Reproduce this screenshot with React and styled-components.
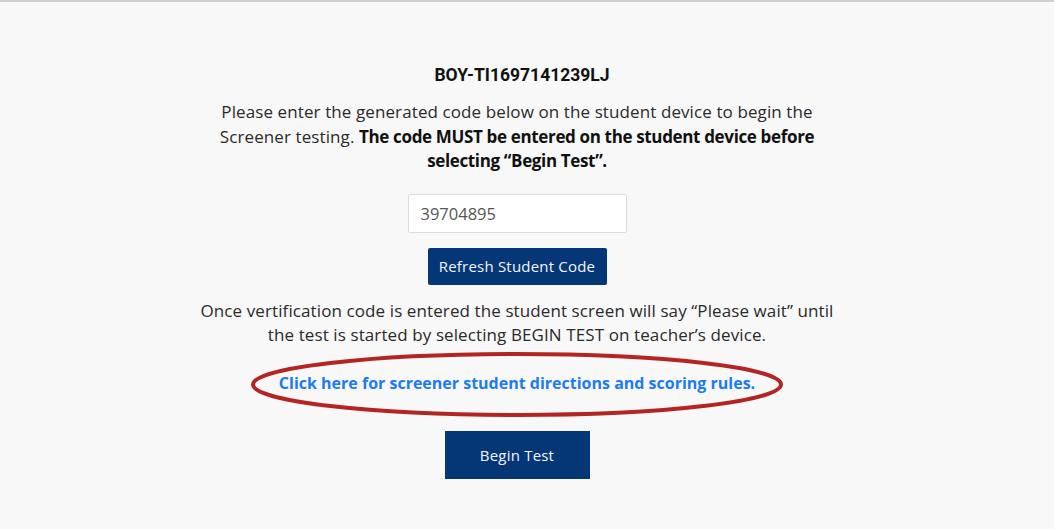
import React from "react";
import styled, { createGlobalStyle } from "styled-components";

const GlobalStyle = createGlobalStyle`
  html, body {
    margin: 0;
    padding: 0;
    background: #f8f8f8;
  }
  body {
    font-family: "Open Sans", "Liberation Sans", sans-serif;
    color: #222;
  }
`;

const Page = styled.div`
  min-height: 529px;
  box-sizing: border-box;
  border-top: 2px solid #cfcfcf;
  background: #f8f8f8;
  display: flex;
  justify-content: center;
  padding: 64px 20px 0 0;
`;

const Panel = styled.div`
  width: 720px;
  display: flex;
  flex-direction: column;
  align-items: center;
  text-align: center;
`;

const SessionCode = styled.h4`
  margin: 0;
  padding-left: 10px;
  font-family: Roboto, "Liberation Sans", sans-serif;
  font-size: 17.5px;
  font-weight: 700;
  color: #111;
  line-height: 18px;
`;

const Note = styled.p`
  margin: ${(p) => p.$top || 0}px 0 0;
  font-size: 17px;
  line-height: 24.5px;
  color: #2a2a2a;
  letter-spacing: 0.1px;
  white-space: nowrap;

  strong {
    font-weight: 700;
    color: #111;
    letter-spacing: -0.35px;
  }
`;

const CodeInput = styled.input`
  margin-top: 20px;
  width: 219px;
  height: 39px;
  box-sizing: border-box;
  border: 1px solid #dcdcdc;
  border-radius: 2px;
  background: #fff;
  padding: 0 12px;
  font-family: "Open Sans", "Liberation Sans", sans-serif;
  font-size: 16.5px;
  color: #555;
  outline: none;
`;

const Button = styled.button`
  margin-top: ${(p) => p.$top}px;
  width: ${(p) => p.$w}px;
  height: ${(p) => p.$h}px;
  border: none;
  border-radius: ${(p) => (p.$round ? 2 : 0)}px;
  background: #053776;
  color: #f2f4f8;
  font-family: "Open Sans", "Liberation Sans", sans-serif;
  font-size: 15px;
  letter-spacing: 0.2px;
  cursor: pointer;
`;

const LinkWrap = styled.div`
  position: relative;
  margin-top: 4px;
  width: 532px;
  height: 65px;
  display: flex;
  align-items: center;
  justify-content: center;
`;

const HelpLink = styled.a`
  font-size: 16px;
  font-weight: 700;
  color: #1a7bf2;
  text-decoration: none;
  white-space: nowrap;
  position: relative;
  z-index: 1;
  margin-bottom: 3px;
`;

const Circle = styled.svg`
  position: absolute;
  left: 0;
  top: 0;
  width: 100%;
  height: 100%;
  overflow: visible;
`;

export default function App() {
  return (
    <>
      <GlobalStyle />
      <Page>
        <Panel>
          <SessionCode>BOY-TI1697141239LJ</SessionCode>
          <Note $top={16}>
            Please enter the generated code below on the student device to begin the
            <br />
            Screener testing.{" "}
            <strong>
              The code MUST be entered on the student device before
              <br />
              selecting “Begin Test”.
            </strong>
          </Note>
          <CodeInput defaultValue="39704895" readOnly />
          <Button $top={15} $w={179} $h={37} $round>
            Refresh Student Code
          </Button>
          <Note $top={14}>
            Once vertification code is entered the student screen will say “Please wait” until
            <br />
            the test is started by selecting BEGIN TEST on teacher’s device.
          </Note>
          <LinkWrap>
            <Circle viewBox="0 0 532 65" preserveAspectRatio="none">
              <ellipse cx="266" cy="32.5" rx="264" ry="30.5" fill="none" stroke="#b52424" strokeWidth="4" />
            </Circle>
            <HelpLink href="#">Click here for screener student directions and scoring rules.</HelpLink>
          </LinkWrap>
          <Button $top={14} $w={145} $h={48}>
            Begin Test
          </Button>
        </Panel>
      </Page>
    </>
  );
}
